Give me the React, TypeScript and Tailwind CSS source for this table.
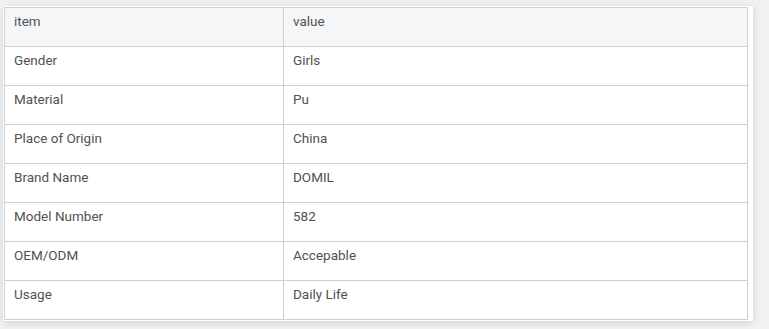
const rows: [string, string][] = [
  ["Gender", "Girls"],
  ["Material", "Pu"],
  ["Place of Origin", "China"],
  ["Brand Name", "DOMIL"],
  ["Model Number", "582"],
  ["OEM/ODM", "Accepable"],
  ["Usage", "Daily Life"],
];

export default function App() {
  return (
    <div
      className="w-[769px] h-[329px] bg-[#f1f1f1] pt-[6px] pl-[3px] overflow-hidden"
      style={{ fontFamily: "Roboto, 'Liberation Sans', sans-serif" }}
    >
      <div className="w-[750px] bg-white pt-px pl-px pr-[5px] pb-px shadow-[0_2px_8px_rgba(0,0,0,0.12)]">
        <table className="w-[744px] border-collapse table-fixed text-[13.5px] leading-[20px] text-[#525252]">
          <colgroup>
            <col className="w-[279px]" />
            <col />
          </colgroup>
          <thead>
            <tr className="bg-[#f5f6f7]">
              <th className="h-[39px] border border-[#cfcfcf] pl-[9px] pt-[3px] align-top text-left font-normal">
                item
              </th>
              <th className="h-[39px] border border-[#cfcfcf] pl-[9px] pt-[3px] align-top text-left font-normal">
                value
              </th>
            </tr>
          </thead>
          <tbody>
            {rows.map(([item, value], i) => (
              <tr key={i}>
                <td className="h-[39px] border border-[#cfcfcf] pl-[9px] pt-[3px] align-top">
                  {item}
                </td>
                <td className="h-[39px] border border-[#cfcfcf] pl-[9px] pt-[3px] align-top">
                  {value}
                </td>
              </tr>
            ))}
          </tbody>
        </table>
      </div>
    </div>
  );
}
